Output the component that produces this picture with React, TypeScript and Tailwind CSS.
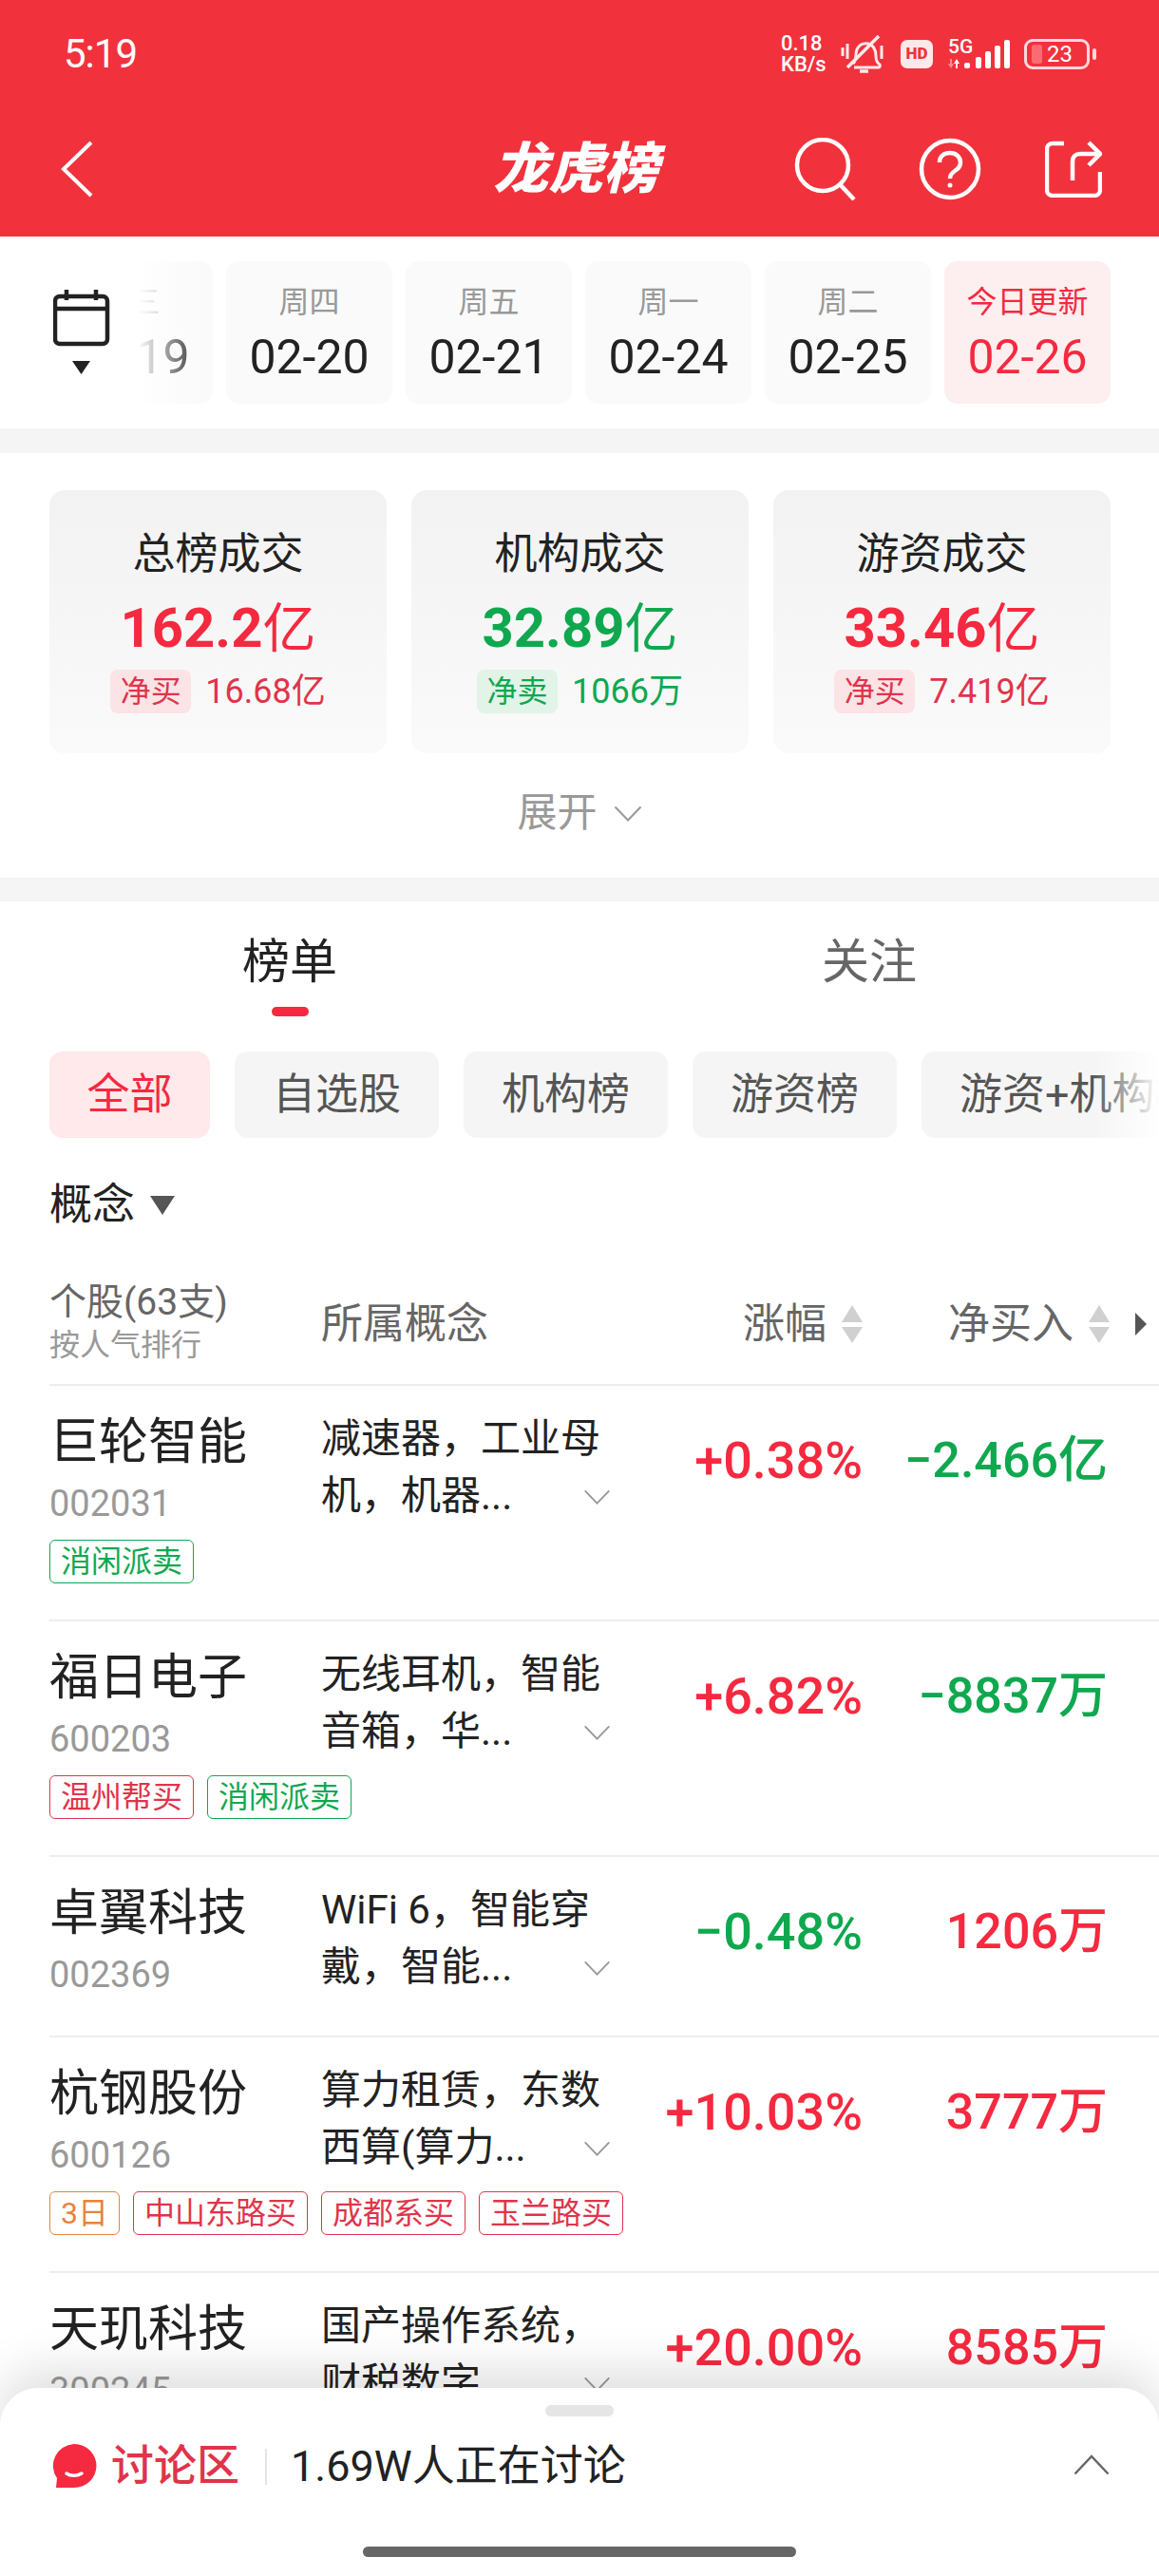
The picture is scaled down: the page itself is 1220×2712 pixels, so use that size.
const RED = 'text-[#f5293f]'
const GREEN = 'text-[#0fa84f]'

type Tag = { text: string; tone: 'red' | 'green' | 'orange' }

type Stock = {
  name: string
  code: string
  concept: [string, string]
  change: string
  changeUp: boolean
  net: string
  netUp: boolean
  tags: Tag[]
}

const stocks: Stock[] = [
  {
    name: '巨轮智能',
    code: '002031',
    concept: ['减速器，工业母', '机，机器...'],
    change: '+0.38%',
    changeUp: true,
    net: '−2.466亿',
    netUp: false,
    tags: [{ text: '消闲派卖', tone: 'green' }],
  },
  {
    name: '福日电子',
    code: '600203',
    concept: ['无线耳机，智能', '音箱，华...'],
    change: '+6.82%',
    changeUp: true,
    net: '−8837万',
    netUp: false,
    tags: [
      { text: '温州帮买', tone: 'red' },
      { text: '消闲派卖', tone: 'green' },
    ],
  },
  {
    name: '卓翼科技',
    code: '002369',
    concept: ['WiFi 6，智能穿', '戴，智能...'],
    change: '−0.48%',
    changeUp: false,
    net: '1206万',
    netUp: true,
    tags: [],
  },
  {
    name: '杭钢股份',
    code: '600126',
    concept: ['算力租赁，东数', '西算(算力...'],
    change: '+10.03%',
    changeUp: true,
    net: '3777万',
    netUp: true,
    tags: [
      { text: '3日', tone: 'orange' },
      { text: '中山东路买', tone: 'red' },
      { text: '成都系买', tone: 'red' },
      { text: '玉兰路买', tone: 'red' },
    ],
  },
  {
    name: '天玑科技',
    code: '300245',
    concept: ['国产操作系统，', '财税数字...'],
    change: '+20.00%',
    changeUp: true,
    net: '8585万',
    netUp: true,
    tags: [],
  },
]

const dates = [
  { day: '周四', date: '02-20' },
  { day: '周五', date: '02-21' },
  { day: '周一', date: '02-24' },
  { day: '周二', date: '02-25' },
]

const stats = [
  { label: '总榜成交', value: '162.2', buy: true, tag: '净买', sub: '16.68亿' },
  { label: '机构成交', value: '32.89', buy: false, tag: '净卖', sub: '1066万' },
  { label: '游资成交', value: '33.46', buy: true, tag: '净买', sub: '7.419亿' },
]

function Chevron({ className }: { className: string }) {
  return (
    <svg viewBox="0 0 30 18" fill="none" className={className}>
      <path d="M1.5 1.5 15 15.5 28.5 1.5" stroke="#999" strokeWidth="2" />
    </svg>
  )
}

function SortArrows() {
  return (
    <svg viewBox="0 0 22 40" className="w-[22px] h-[40px]">
      <path d="M11 0 22 18H0Z" fill="#d0d0d0" />
      <path d="M0 23H22L11 40Z" fill="#d0d0d0" />
    </svg>
  )
}

function StatusBar() {
  return (
    <div className="h-[90px] pt-[24px] pl-[67px] pr-[66px] flex items-center justify-between text-white">
      <span className="text-[42px] leading-none tracking-[-1px]">5:19</span>
      <div className="flex items-center">
        <div className="w-[52px] text-[22px] font-medium leading-[22px]">
          <div>0.18</div>
          <div>KB/s</div>
        </div>
        <svg viewBox="0 0 48 42" fill="none" className="w-[48px] h-[42px] ml-[11px] opacity-90" stroke="#fff" strokeWidth="3">
          <path d="M13 31c4-4 2-10 4-15 2-4 6-7 12-6 7 2 8 8 8 13 0 4 1 7 4 9 1 2 0 3-2 3H14" />
          <path d="M7 35 40 2" strokeWidth="3.5" />
          <path d="M2 14v9M7 10v16M43 12v14" />
          <path d="M20 39h9" strokeWidth="3.5" />
        </svg>
        <span className="ml-[15px] w-[34px] h-[30px] rounded-[7px] bg-[#ffe8ea] text-[#f1323c] text-[17px] font-black flex items-center justify-center">
          HD
        </span>
        <div className="relative ml-[16px] w-[66px] h-[32px]">
          <svg viewBox="0 0 66 32" className="w-[66px] h-[32px]" fill="#fff">
            <path d="M2 21h2v5h2l-3 5-3-5h2Z" fill="#fb8a91" />
            <path d="M9 21l3 5h-2v5H8v-5H6Z" />
            <rect x="17" y="25" width="6" height="6" rx="2" />
            <rect x="29" y="19" width="6" height="12" rx="2" />
            <rect x="39" y="13" width="6" height="18" rx="2" />
            <rect x="49" y="7" width="6" height="24" rx="2" />
            <rect x="59" y="1" width="6" height="30" rx="2" />
          </svg>
          <span className="absolute left-0 -top-[2px] text-[21px] font-medium leading-[20px]">5G</span>
        </div>
        <div className="ml-[14px] w-[69px] h-[32px] rounded-[9px] border-[3px] border-[#ffd9dc] flex items-center pl-[5px]">
          <span className="w-[11px] h-[20px] rounded-[3px] bg-[#fb6b74]" />
          <span className="ml-[5px] text-[24px] leading-none">23</span>
        </div>
        <span className="ml-[3px] w-[4px] h-[12px] rounded-full bg-[#ffd9dc]" />
      </div>
    </div>
  )
}

function NavBar() {
  return (
    <div className="h-[159px] pt-[16px] pl-[52px] pr-[60px] grid grid-cols-[1fr_auto_1fr] items-center text-white">
      <svg viewBox="0 0 34 60" fill="none" className="w-[34px] h-[60px] ml-[12px]">
        <path d="M32 2 3 30l29 28" stroke="#fff" strokeWidth="4" />
      </svg>
      <span className="text-[58px] leading-none font-black italic">龙虎榜</span>
      <div className="flex items-center justify-end">
        <svg viewBox="0 0 66 66" fill="none" stroke="#fff" strokeWidth="4.5" className="w-[66px] h-[66px]">
          <circle cx="30" cy="29" r="27" />
          <path d="M48 49 63 65" />
        </svg>
        <svg viewBox="0 0 66 66" fill="none" stroke="#fff" strokeWidth="4.5" className="w-[66px] h-[66px] ml-[65px]">
          <circle cx="33" cy="33" r="30" />
          <path d="M22 26c0-7 5-10 11-10s11 4 11 10c0 5-3 7-6 9-3 2-5 4-5 8" />
          <circle cx="33" cy="50" r="2.5" fill="#fff" stroke="none" />
        </svg>
        <svg viewBox="0 0 60 60" fill="none" stroke="#fff" strokeWidth="4.5" className="w-[60px] h-[60px] ml-[67px]">
          <path d="M20 3H8a6 6 0 0 0-6 6v43a6 6 0 0 0 6 6h44a6 6 0 0 0 6-6V33" />
          <path d="M29 42V22c0-5 3-8 8-8h20" />
          <path d="M46 2 58 14 46 26" />
        </svg>
      </div>
    </div>
  )
}

function DateCard({ day, date, active }: { day: string; date: string; active?: boolean }) {
  return (
    <div
      className={`w-[175px] h-[150px] shrink-0 rounded-[14px] flex flex-col items-center pt-[21px] ${
        active ? 'bg-[#fdeeef]' : 'bg-[#fafafa]'
      }`}
    >
      <span className={`text-[32px] leading-[44px] ${active ? RED : 'text-[#999]'}`}>{day}</span>
      <span className={`mt-[8px] text-[50px] leading-[56px] ${active ? RED : 'text-[#222]'}`}>{date}</span>
    </div>
  )
}

function DateRow() {
  return (
    <div className="h-[202px] bg-white pt-[26px] flex">
      <div className="w-[145px] shrink-0 pl-[56px] pt-[29px]">
        <svg viewBox="0 0 60 92" fill="none" className="w-[60px] h-[92px]">
          <rect x="2" y="8" width="55" height="50" rx="5" stroke="#222" strokeWidth="4.5" />
          <path d="M2 21h55M14 1v11M45 1v11" stroke="#222" strokeWidth="4.5" />
          <path d="M20 76h19L29.5 90Z" fill="#222" />
        </svg>
      </div>
      <div className="relative w-[1024px] h-[150px] overflow-hidden">
        <div className="flex gap-[14px] -ml-[96px]">
          <DateCard day="周三" date="02-19" />
          {dates.map((d) => (
            <DateCard key={d.date} day={d.day} date={d.date} />
          ))}
          <DateCard day="今日更新" date="02-26" active />
        </div>
        <div className="absolute left-0 top-0 w-[70px] h-full bg-gradient-to-r from-white to-transparent" />
      </div>
    </div>
  )
}

function StatsSection() {
  return (
    <div className="bg-white pt-[39px] h-[447px]">
      <div className="pl-[52px] flex gap-[26px]">
        {stats.map((s) => (
          <div
            key={s.label}
            className="w-[355px] h-[277px] rounded-[16px] bg-gradient-to-b from-[#f2f2f2] to-[#fafafa] flex flex-col items-center pt-[40px]"
          >
            <span className="text-[45px] leading-[56px] text-[#222]">{s.label}</span>
            <span className={`mt-[18px] text-[58px] leading-[62px] font-bold ${s.buy ? RED : GREEN}`}>
              {s.value}
              <span className="font-normal text-[56px]">亿</span>
            </span>
            <div className="mt-[8px] flex items-center">
              <span
                className={`w-[85px] h-[46px] rounded-[8px] flex items-center justify-center text-[32px] ${
                  s.buy ? 'bg-[#fbe3e6] text-[#e0344a]' : 'bg-[#e2f3e8] text-[#0fa84f]'
                }`}
              >
                {s.tag}
              </span>
              <span className={`ml-[15px] text-[36px] ${s.buy ? 'text-[#e0344a]' : GREEN}`}>{s.sub}</span>
            </div>
          </div>
        ))}
      </div>
      <div className="mt-[33px] flex items-center justify-center">
        <span className="text-[42px] leading-[60px] text-[#999]">展开</span>
        <Chevron className="w-[30px] h-[18px] ml-[17px] mt-[2px]" />
      </div>
    </div>
  )
}

function Tabs() {
  return (
    <div className="grid grid-cols-2 h-[158px]">
      <div className="flex flex-col items-center pt-[34px]">
        <span className="text-[50px] leading-[60px] text-[#222]">榜单</span>
        <span className="mt-[17px] w-[39px] h-[10px] rounded-full bg-[#f5293f]" />
      </div>
      <div className="flex flex-col items-center pt-[34px]">
        <span className="text-[50px] leading-[60px] text-[#666]">关注</span>
      </div>
    </div>
  )
}

function Filters() {
  const items = ['自选股', '机构榜', '游资榜']
  return (
    <div className="relative h-[91px] pl-[52px] flex gap-[26px] overflow-hidden">
      <span className="w-[169px] shrink-0 rounded-[14px] bg-[#ffe9ea] text-[#f5293f] text-[45px] flex items-center justify-center">
        全部
      </span>
      {items.map((t) => (
        <span
          key={t}
          className="w-[215px] shrink-0 rounded-[14px] bg-[#f5f5f5] text-[#555] text-[45px] flex items-center justify-center"
        >
          {t}
        </span>
      ))}
      <span className="w-[300px] shrink-0 rounded-[14px] bg-[#f5f5f5] text-[#555] text-[45px] flex items-center pl-[40px] whitespace-nowrap">
        游资+机构榜
      </span>
      <div className="absolute right-0 top-0 w-[70px] h-full bg-gradient-to-l from-white to-transparent" />
    </div>
  )
}

function TableHead() {
  return (
    <div className="ml-[52px] h-[139px] pt-[10px] flex items-center border-b-2 border-[#eeeeee]">
      <div className="w-[286px]">
        <div className="text-[39px] leading-[45px] text-[#666]">个股(63支)</div>
        <div className="text-[32px] leading-[44px] text-[#999]">按人气排行</div>
      </div>
      <div className="w-[322px] text-[44px] text-[#666]">所属概念</div>
      <div className="w-[248px] flex items-center justify-end gap-[16px]">
        <span className="text-[44px] text-[#666]">涨幅</span>
        <SortArrows />
      </div>
      <div className="w-[260px] flex items-center justify-end gap-[16px]">
        <span className="text-[44px] text-[#666]">净买入</span>
        <SortArrows />
      </div>
      <svg viewBox="0 0 12 24" className="w-[12px] h-[24px] ml-[27px]">
        <path d="M0 0 12 12 0 24Z" fill="#555" />
      </svg>
    </div>
  )
}

const tagStyle = {
  red: 'border-[#e0344a] text-[#e0344a]',
  green: 'border-[#0fa84f] text-[#0fa84f]',
  orange: 'border-[#e8833a] text-[#e8833a]',
}

function Row({ stock }: { stock: Stock }) {
  return (
    <div className="ml-[52px] pt-[26px] flex border-b-2 border-[#eeeeee]">
      <div className={`w-[286px] shrink-0 ${stock.tags.length ? 'pb-[38px]' : 'pb-[34px]'}`}>
        <div className="text-[52px] leading-[68px] text-[#222] whitespace-nowrap">{stock.name}</div>
        <div className="text-[38px] leading-[60px] text-[#999]">{stock.code}</div>
        {stock.tags.length > 0 && (
          <div className="mt-[8px] flex gap-[14px] w-[700px]">
            {stock.tags.map((t) => (
              <span
                key={t.text}
                className={`h-[46px] px-[11px] rounded-[6px] border flex items-center text-[32px] whitespace-nowrap ${tagStyle[t.tone]}`}
              >
                {t.text}
              </span>
            ))}
          </div>
        )}
      </div>
      <div className="w-[322px] shrink-0 text-[42px] leading-[60px] text-[#222]">
        <div className="whitespace-nowrap">{stock.concept[0]}</div>
        <div className="w-[305px] flex items-center justify-between">
          <span className="whitespace-nowrap">{stock.concept[1]}</span>
          <Chevron className="w-[29px] h-[17px] mt-[2px]" />
        </div>
      </div>
      <div
        className={`w-[248px] shrink-0 pt-[23px] text-right text-[54px] leading-[60px] font-medium ${
          stock.changeUp ? RED : GREEN
        }`}
      >
        {stock.change}
      </div>
      <div
        className={`w-[258px] shrink-0 pt-[23px] text-right text-[52px] leading-[60px] font-medium whitespace-nowrap ${
          stock.netUp ? RED : GREEN
        }`}
      >
        {stock.net}
      </div>
    </div>
  )
}

function DiscussionSheet() {
  return (
    <div className="absolute left-0 right-0 bottom-0 h-[198px] rounded-t-[40px] bg-white shadow-[0_-18px_50px_rgba(0,0,0,0.13)]">
      <div className="mx-auto mt-[18px] w-[72px] h-[12px] rounded-full bg-[#e5e5e5]" />
      <div className="mt-[28px] pl-[54px] pr-[52px] flex items-center h-[50px]">
        <svg viewBox="0 0 48 50" className="w-[48px] h-[50px]">
          <path d="M24 1a23.500 23 0 0 1 0 46H5l1-10A23.500 23 0 0 1 24 1Z" fill="#f5293f" />
          <path d="M16 32c4 3 11 3 16 0" stroke="#fff" strokeWidth="3.500" fill="none" strokeLinecap="round" />
        </svg>
        <span className="ml-[15px] text-[45px] font-medium text-[#e0344a]">讨论区</span>
        <span className="ml-[27px] w-[2px] h-[38px] bg-[#e5e5e5]" />
        <span className="ml-[25px] text-[45px] text-[#222]">1.69W人正在讨论</span>
        <svg viewBox="0 0 38 22" fill="none" className="w-[38px] h-[22px] ml-auto -mt-[4px]">
          <path d="M1.500 20.500 19 2 36.500 20.500" stroke="#666" strokeWidth="2.500" />
        </svg>
      </div>
      <div className="mx-auto mt-[59px] w-[456px] h-[11px] rounded-full bg-[#666]" />
    </div>
  )
}

export default function App() {
  return (
    <div
      lang="zh-CN"
      className="relative w-[1220px] h-[2712px] overflow-hidden bg-white font-[Roboto,'Noto_Sans_CJK_SC',sans-serif]"
    >
      <div className="bg-[#f1323c]">
        <StatusBar />
        <NavBar />
      </div>
      <DateRow />
      <div className="h-[26px] bg-[#f5f5f5]" />
      <StatsSection />
      <div className="h-[25px] bg-[#f5f5f5]" />
      <Tabs />
      <Filters />
      <div className="h-[122px] pt-[20px] pl-[52px] flex items-center text-[45px] text-[#222]">
        概念
        <svg viewBox="0 0 26 20" className="w-[26px] h-[20px] ml-[16px]">
          <path d="M0 0H26L13 20Z" fill="#555" />
        </svg>
      </div>
      <TableHead />
      {stocks.map((s) => (
        <Row key={s.code} stock={s} />
      ))}
      <DiscussionSheet />
    </div>
  )
}
